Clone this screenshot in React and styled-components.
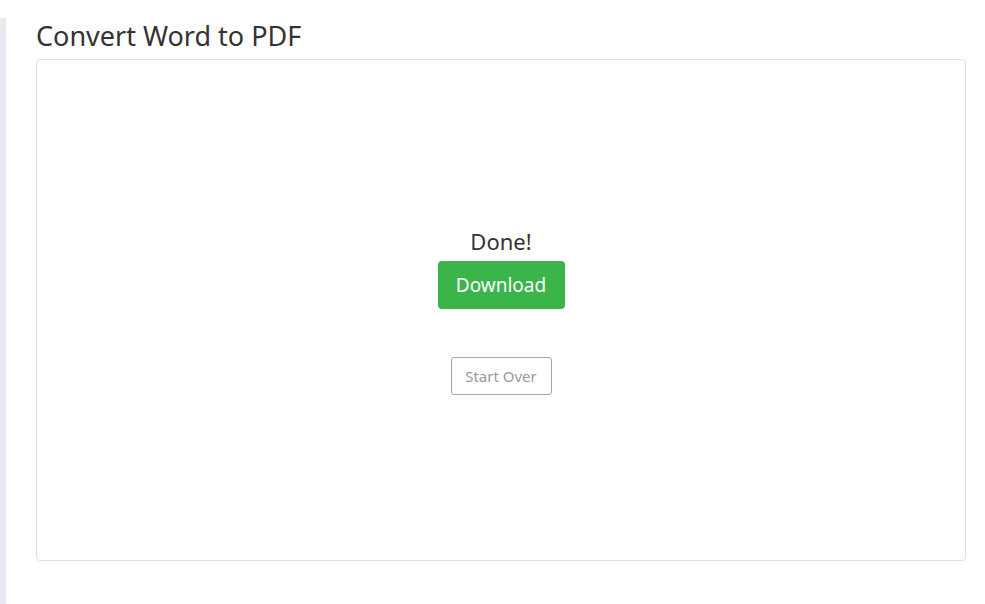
import React from "react";
import styled, { createGlobalStyle } from "styled-components";

const GlobalStyle = createGlobalStyle`
  html, body {
    margin: 0;
    padding: 0;
    background: #fff;
    font-family: "Noto Sans", "Open Sans", sans-serif;
    color: #333;
  }
`;

export default function App() {
  return (
    <>
      <GlobalStyle />
      <Pagina>
        <BarraLateral />
        <Contenido>
          <Titulo>Convert Word to PDF</Titulo>
          <Tarjeta>
            <Estado>Done!</Estado>
            <BotonDescarga>Download</BotonDescarga>
            <BotonReinicio>Start Over</BotonReinicio>
          </Tarjeta>
        </Contenido>
      </Pagina>
    </>
  );
}

const Pagina = styled.div`
  display: flex;
  height: 604px;
  overflow: hidden;
`;

const BarraLateral = styled.aside`
  width: 6px;
  margin-top: 18px;
  background-color: #e7ebef;
  flex-shrink: 0;
`;

const Contenido = styled.main`
  flex: 1;
  padding: 18px 19px 0 30px;
  display: flex;
  flex-direction: column;
`;

const Titulo = styled.h1`
  margin: 0 0 6px;
  font-size: 27px;
  font-weight: 400;
  line-height: 35px;
  color: #333;
`;

const Tarjeta = styled.section`
  height: 502px;
  border: 1px solid #e0e0e0;
  border-radius: 4px;
  display: flex;
  flex-direction: column;
  align-items: center;
  justify-content: center;
  box-sizing: border-box;
`;

const Estado = styled.h2`
  margin: 0 0 5px;
  font-size: 22px;
  font-weight: 400;
  line-height: 30px;
  color: #333;
`;

const BotonDescarga = styled.button`
  width: 127px;
  height: 48px;
  border: none;
  border-radius: 4px;
  background-color: #39b54a;
  color: #fff;
  font-family: inherit;
  font-size: 19px;
  cursor: pointer;
`;

const BotonReinicio = styled.button`
  margin-top: 48px;
  width: 101px;
  height: 38px;
  border: 1px solid #aaa49e;
  border-radius: 3px;
  background: #fff;
  color: #999;
  font-family: inherit;
  font-size: 15px;
  cursor: pointer;
`;
